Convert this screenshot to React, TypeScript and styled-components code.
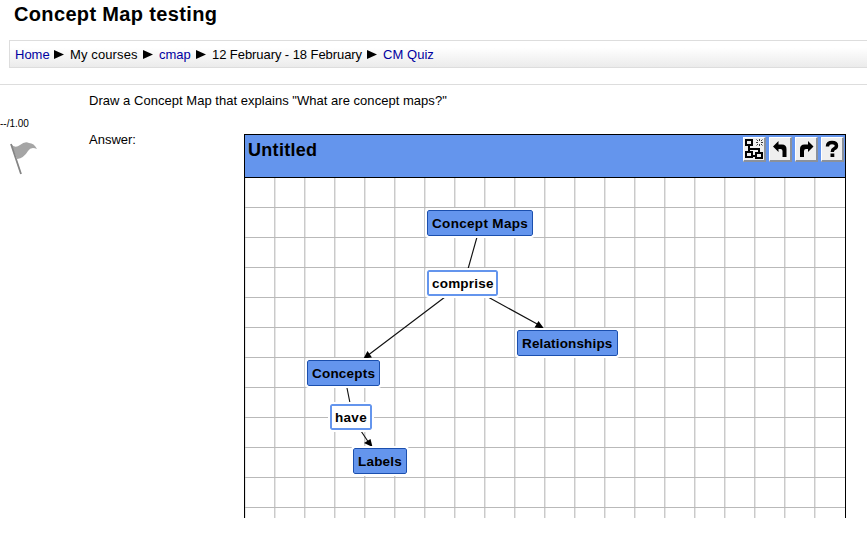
import React from "react";
import styled, { createGlobalStyle } from "styled-components";

const GlobalStyle = createGlobalStyle`
  * { box-sizing: border-box; }
  body { margin: 0; background: #fff; color: #000; overflow: hidden; font: 13px/16px "Liberation Sans", Arial, sans-serif; }
`;

const Page = styled.main`
  width: 867px;
  height: 539px;
  overflow: hidden;
`;

const Title = styled.h1`
  margin: 0;
  height: 40px;
  padding: 2px 0 0 14px;
  font-size: 20px;
  line-height: 24px;
  letter-spacing: 0.35px;
  white-space: nowrap;
`;

const Breadcrumb = styled.nav`
  display: flex;
  align-items: center;
  height: 28px;
  margin-left: 9px;
  padding: 1px 0 0 5px;
  border: 1px solid #ddd;
  border-right: 0;
  background: linear-gradient(#fff 25%, #ebebeb);
  white-space: nowrap;
`;

const Crumb = styled.span<{ $link?: boolean; $width: number; $spacing?: number }>`
  width: ${(p) => p.$width}px;
  color: ${(p) => (p.$link ? "#0000a0" : "#000")};
  letter-spacing: ${(p) => p.$spacing ?? 0}px;
`;

const Separator = styled.svg`
  width: 10px;
  height: 9px;
  margin-right: 6px;
`;

const Question = styled.section`
  display: grid;
  grid-template-columns: 89px 155px 1fr;
  margin-top: 16px;
  border-top: 1px solid #ddd;
`;

const Info = styled.aside`
  grid-column: 1;
  grid-row: 1 / 3;
  padding-top: 33px;
  font-size: 10px;
  line-height: 12px;
`;

const Grade = styled.div`
  white-space: nowrap;
`;

const Flag = styled.svg`
  display: block;
  width: 30px;
  height: 34px;
  margin: 11px 0 0 9px;
`;

const Prompt = styled.p`
  grid-column: 2 / 4;
  grid-row: 1;
  height: 49px;
  margin: 0;
  padding-top: 8px;
  letter-spacing: 0.03px;
`;

const Answer = styled.span`
  grid-column: 2;
  grid-row: 2;
  margin-top: -2px;
`;

const Editor = styled.div`
  width: 602px;
  height: 384px;
  border: 1px solid #000;
  border-bottom: 0;
`;

const EditorHeader = styled.header`
  display: flex;
  justify-content: space-between;
  height: 43px;
  padding: 2px 1px 0 3px;
  background: #6495ed;
  border-bottom: 1px solid #000;
`;

const MapTitle = styled.h2`
  margin: 3px 0 0;
  font-size: 18px;
  line-height: 20px;
  letter-spacing: 0.3px;
`;

const Toolbar = styled.div`
  display: flex;
  gap: 3px;
`;

const Tool = styled.button`
  width: 23px;
  height: 25px;
  padding: 0;
  border: 1px solid;
  border-width: 1px 2px 2px 1px;
  border-color: #fff #8b919b #8b919b #fff;
  background: #efefef;
`;

const ToolIcon = styled.svg`
  display: block;
  width: 20px;
  height: 22px;
`;

const Canvas = styled.div`
  position: relative;
  height: 340px;
  background:
    repeating-linear-gradient(to bottom, transparent 0 29px, #b9b9b9 29px 30px),
    repeating-linear-gradient(to right, #e6e6e6 0 1px, transparent 1px 29px, #cacaca 29px 30px) 0 0 / 599px 100% no-repeat,
    #fff;
`;

const Links = styled.svg`
  position: absolute;
  inset: 0;
`;

const Node = styled.div<{ $x: number; $y: number; $w: number; $link?: boolean; $spacing: number }>`
  position: absolute;
  left: ${(p) => p.$x}px;
  top: ${(p) => p.$y}px;
  width: ${(p) => p.$w}px;
  height: 26px;
  padding-left: ${(p) => (p.$link ? 3 : 4)}px;
  border: ${(p) => (p.$link ? "2px solid #6495ed" : "1px solid #1b4fae")};
  border-radius: 2px;
  outline: 2px solid #fff;
  background: ${(p) => (p.$link ? "#fff" : "#6495ed")};
  font-size: 13.5px;
  font-weight: bold;
  line-height: ${(p) => (p.$link ? 23 : 25)}px;
  letter-spacing: ${(p) => p.$spacing}px;
  white-space: nowrap;
`;

const crumbs = [
  { text: "Home", width: 39, link: true },
  { text: "My courses", width: 73, spacing: 0.12 },
  { text: "cmap", width: 37, link: true },
  { text: "12 February - 18 February", width: 155, spacing: -0.07 },
  { text: "CM Quiz", width: 60, link: true, spacing: 0.05 },
];

const nodes = [
  { text: "Concept Maps", x: 182, y: 32, w: 106, spacing: 0.32 },
  { text: "comprise", x: 182, y: 92, w: 71, link: true, spacing: 0.2 },
  { text: "Relationships", x: 272, y: 152, w: 101, spacing: 0.15 },
  { text: "Concepts", x: 62, y: 182, w: 73, spacing: 0.2 },
  { text: "have", x: 85, y: 226, w: 42, link: true, spacing: 0.3 },
  { text: "Labels", x: 108, y: 270, w: 54, spacing: 0.2 },
];

const Turn = () => (
  <path d="M3 8.500 8.500 3V6.500H12q4.500 0 4.500 4.500v8h-4v-6q0-2-2-2h-2v3Z" />
);

export default function App() {
  return (
    <Page>
      <GlobalStyle />
      <Title>Concept Map testing</Title>
      <Breadcrumb>
        {crumbs.map((c, i) => (
          <React.Fragment key={c.text}>
            {i > 0 && (
              <Separator viewBox="0 0 10 9"><path d="M0 0 10 4.500 0 9Z" /></Separator>
            )}
            <Crumb $width={c.width} $link={c.link} $spacing={c.spacing}>{c.text}</Crumb>
          </React.Fragment>
        ))}
      </Breadcrumb>
      <Question>
        <Info>
          <Grade>--/1.00</Grade>
          <Flag viewBox="0 0 30 34">
            <path d="M2 3Q6 8 11 4T20 2Q25 2 28 8Q22 5 19 10Q15 17 8 18Z" fill="#a5a5a5" />
            <path d="M2 3 12 33" stroke="#858585" strokeWidth="1.8" />
          </Flag>
        </Info>
        <Prompt>Draw a Concept Map that explains "What are concept maps?"</Prompt>
        <Answer>Answer:</Answer>
        <Editor>
          <EditorHeader>
            <MapTitle>Untitled</MapTitle>
            <Toolbar>
              <Tool aria-label="Arrange">
                <ToolIcon viewBox="0 0 20 22">
                  <path
                    d="M2 2h6v5H2zM2 14h6v5H2zM12 15h6v5h-6zM5 8v6M5 11h10v4M8 18h4"
                    fill="none"
                    stroke="#000"
                    strokeWidth="2"
                    shapeRendering="crispEdges"
                  />
                  <path
                    d="M15.500 1v2M15.500 6v2M12 4.500h2M17 4.500h2M12.500 1.500l1.500 1.500M17 6l1.500 1.500M18.500 1.500 17 3M14 6l-1.500 1.500"
                    stroke="#222"
                    strokeWidth="0.9"
                  />
                </ToolIcon>
              </Tool>
              <Tool aria-label="Undo"><ToolIcon viewBox="0 0 20 22"><Turn /></ToolIcon></Tool>
              <Tool aria-label="Redo">
                <ToolIcon viewBox="0 0 20 22"><g transform="translate(20.5 0) scale(-1 1)"><Turn /></g></ToolIcon>
              </Tool>
              <Tool aria-label="Help">
                <ToolIcon viewBox="0 0 20 22">
                  <path d="M5.500 8.500V8q0-3.500 4.500-3.500t4.500 3.300q0 1.900-2.400 3-1.800.9-1.800 3.200" fill="none" stroke="#000" strokeWidth="3.4" />
                  <path d="M8.500 15.500h3.800v3.500h-3.800z" />
                </ToolIcon>
              </Tool>
            </Toolbar>
          </EditorHeader>
          <Canvas>
            <Links width="600" height="340" viewBox="0 0 600 340">
              <g stroke="#111" strokeWidth="1.15">
                <path d="M232 59 223 91M200 119 122 178M243 119 294 147M102 210 105 225M116 253 124 265" />
              </g>
              <path d="M118.500 180.500 122.500 173 127 179.500ZM299 150.500 289.500 149.500 293.500 143ZM127.500 269 119 265 125.500 261Z" />
            </Links>
            {nodes.map((n) => (
              <Node key={n.text} $x={n.x} $y={n.y} $w={n.w} $link={n.link} $spacing={n.spacing}>{n.text}</Node>
            ))}
          </Canvas>
        </Editor>
      </Question>
    </Page>
  );
}
